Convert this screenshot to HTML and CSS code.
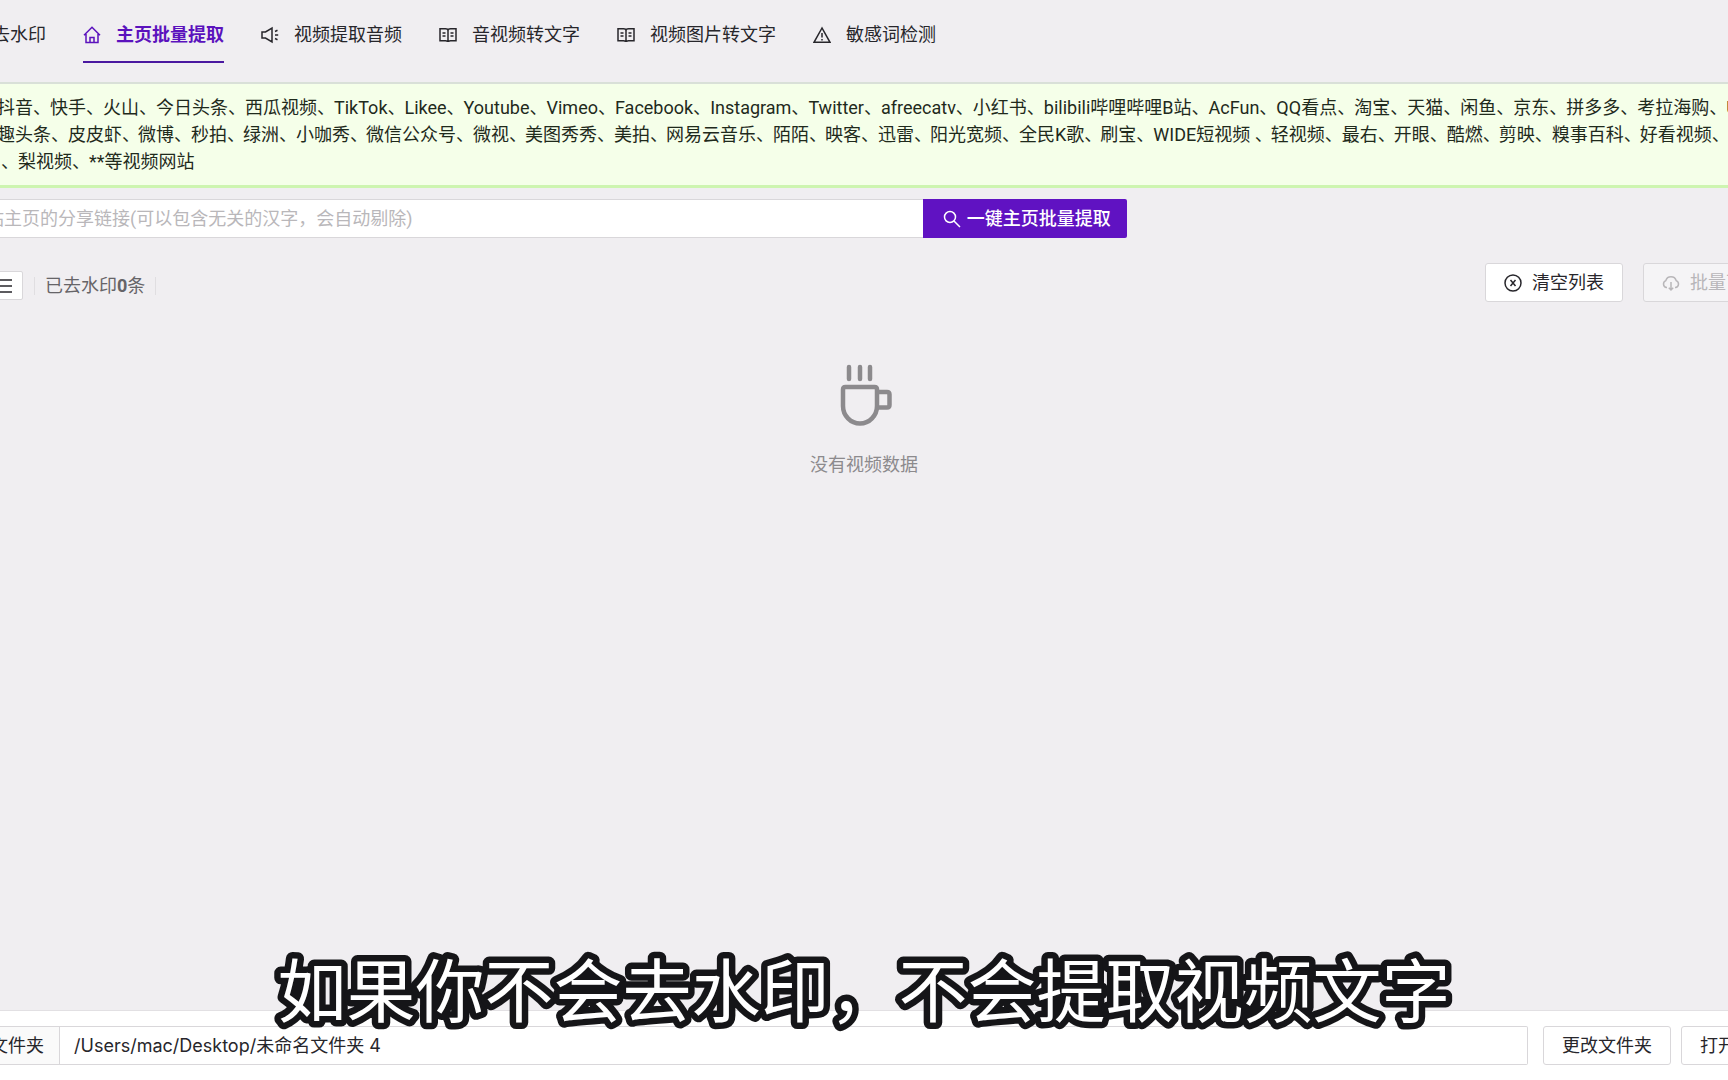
FILE: index.html
```html
<!DOCTYPE html>
<html lang="zh-CN">
<head>
<meta charset="utf-8">
<title>主页批量提取</title>
<link rel="stylesheet" href="styles.css">
</head>
<body>
<nav class="tabs">
  <a class="tab" href="#watermark">去水印</a>
  <a class="tab active" href="#home" aria-current="page">
    <svg class="icon" viewBox="0 0 18 18"><path d="M1 9.3 9 1.2l8 8.1M3 8v8.6h12V8M7 16.4v-5h4v5"/></svg>主页批量提取</a>
  <a class="tab" href="#audio">
    <svg class="icon" viewBox="0 0 18 18"><path d="M1 6v6h3.5l6.5 4V2L4.500 6zM14 5.500l2.500-1.200M14 9h3.200M14 12.500l2.500 1.200"/></svg>视频提取音频</a>
  <a class="tab" href="#speech">
    <svg class="icon" viewBox="0 0 18 18"><path d="M1 2.800h5.500Q9 2.800 9 4.500q0-1.700 2.500-1.700H17v12h-5.500Q9 14.800 9 16q0-1.200-2.500-1.200H1zM9 4.500V16M3.500 7h3M3.500 10h3M11.500 7h3M11.500 10h3"/></svg>音视频转文字</a>
  <a class="tab" href="#ocr">
    <svg class="icon" viewBox="0 0 18 18"><path d="M1 2.800h5.500Q9 2.800 9 4.500q0-1.700 2.500-1.700H17v12h-5.500Q9 14.800 9 16q0-1.200-2.500-1.200H1zM9 4.500V16M3.500 7h3M3.500 10h3M11.500 7h3M11.500 10h3"/></svg>视频图片转文字</a>
  <a class="tab" href="#words">
    <svg class="icon" viewBox="0 0 18 18"><path d="M9 2 1 16.300h16zM9 7v4.500M9 13v1.500"/></svg>敏感词检测</a>
</nav>

<section class="notice">
  <ul class="sites"><li>抖音、</li><li>快手、</li><li>火山、</li><li>今日头条、</li><li>西瓜视频、</li><li>TikTok、</li><li>Likee、</li><li>Youtube、</li><li>Vimeo、</li><li>Facebook、</li><li>Instagram、</li><li>Twitter、</li><li>afreecatv、</li><li>小红书、</li><li>bilibili哔哩哔哩B站、</li><li>AcFun、</li><li>QQ看点、</li><li>淘宝、</li><li>天猫、</li><li>闲鱼、</li><li>京东、</li><li>拼多多、</li><li>考拉海购、</li><li>U</li></ul>
  <ul class="sites dense"><li>趣头条、</li><li>皮皮虾、</li><li>微博、</li><li>秒拍、</li><li>绿洲、</li><li>小咖秀、</li><li>微信公众号、</li><li>微视、</li><li>美图秀秀、</li><li>美拍、</li><li>网易云音乐、</li><li>陌陌、</li><li>映客、</li><li>迅雷、</li><li>阳光宽频、</li><li>全民K歌、</li><li>刷宝、</li><li>WIDE短视频 、</li><li>轻视频、</li><li>最右、</li><li>开眼、</li><li>酷燃、</li><li>剪映、</li><li>糗事百科、</li><li>好看视频、</li></ul>
  <ul class="sites"><li>、</li><li>梨视频、</li><li>**等视频网站</li></ul>
</section>

<main class="main">
  <form class="search">
    <input class="search-input" type="text" aria-label="主页链接" placeholder="站主页的分享链接(可以包含无关的汉字，会自动剔除)">
    <button class="primary" type="button">
      <svg class="icon" viewBox="0 0 18 18"><circle cx="7" cy="7" r="5.500"/><path d="m11 11 6 6"/></svg>一键主页批量提取</button>
  </form>

  <div class="toolbar">
    <button class="list-button" type="button" aria-label="列表">
      <svg class="icon" viewBox="0 0 18 18"><path d="M2 3h15M2 9h15M2 15h15"/></svg>
    </button>
    <p class="count">已去水印<b>0</b>条</p>
    <div class="actions">
      <button class="button" type="button">
        <svg class="icon" viewBox="0 0 18 18"><circle cx="9" cy="9" r="8"/><path d="m6.500 6 5 6m0-6-5 6"/></svg>清空列表</button>
      <button class="button" type="button" disabled>
        <svg class="icon" viewBox="0 0 18 18"><path d="M5 13.500H4.500A3.600 3.600 0 0 1 3.800 6.600a5.400 5.400 0 0 1 10.400 0 3.600 3.600 0 0 1-.7 6.900H13M9 8v8M6.800 13.800 9 16l2.200-2.200"/></svg>批量下载</button>
    </div>
  </div>

  <div class="empty">
    <svg class="cup" viewBox="0 0 52 62"><path d="M9 3v12M20 3v12M30 3v12M3 25.500q0-2.500 2.500-2.500h29q2.500 0 2.500 2.500V42a17 17.500 0 0 1-34 0zM38 28h9q2.500 0 2.500 2.500v10.500q0 2.500-2.500 2.500h-9"/></svg>
    <p>没有视频数据</p>
  </div>
</main>

<footer class="footer">
  <div class="folder">
    <label class="folder-label" for="path">文件夹</label>
    <input class="folder-input" id="path" type="text" value="/Users/mac/Desktop/未命名文件夹 4">
  </div>
  <button class="button" type="button">更改文件夹</button>
  <button class="button" type="button">打开文件夹</button>
</footer>

<svg class="caption" role="img" aria-label="字幕"><text x="50%" y="77" text-anchor="middle">如果你不会去水印，不会提取视频文字</text></svg>
</body>
</html>
```
FILE: styles.css
```css
* { box-sizing: border-box; }

body {
  margin: 0;
  min-height: 100vh;
  display: flex;
  flex-direction: column;
  position: relative;
  overflow: hidden;
  background: #f0eef1;
  color: #27262b;
  font: 18px/27px Roboto, "Noto Sans CJK SC", sans-serif;
  white-space: nowrap;
}

p, ul { margin: 0; padding: 0; }
button, input { font: inherit; color: inherit; }

.icon {
  width: 18px;
  height: 18px;
  flex: none;
  fill: none;
  stroke: currentColor;
  stroke-width: 1.5;
}

.tabs {
  display: flex;
  gap: 37px;
  height: 82px;
  margin-left: -8px;
  align-items: flex-start;
}

.tab {
  display: flex;
  align-items: center;
  gap: 15px;
  height: 63px;
  padding: 8px 0 0;
  border-bottom: 2px solid transparent;
  color: inherit;
  text-decoration: none;
}

.tab.active {
  color: #5b12bd;
  font-weight: 700;
  border-color: #4a18a0;
}

.notice {
  padding: 10px 0;
  border-top: 2px solid #d9e0d8;
  border-bottom: 3px solid #cdf5b0;
  background: #f5ffe9;
  color: #1f2a1c;
}

.sites {
  display: flex;
  list-style: none;
  margin-left: -3px;
}

.sites:last-child { margin-left: 1px; }
.sites li { flex: none; margin-right: -1px; white-space: pre; }
.sites.dense li:nth-child(even) { margin-right: -2px; }

.main { flex: 1; }

.search { display: flex; margin-top: 11px; }

.search-input {
  width: calc(53.4vw + 14px);
  height: 39px;
  margin-left: -14px;
  padding: 0;
  border: solid #d9d7da;
  border-width: 1px 0;
  background: #fff;
}

.search-input::placeholder { color: #b9b7ba; opacity: 1; }

.primary {
  display: flex;
  align-items: center;
  gap: 6px;
  height: 39px;
  padding: 0 16px 0 20px;
  border: 0;
  border-radius: 0 2px 2px 0;
  background: #6012c2;
  color: #fff;
  font-weight: 500;
}

.toolbar {
  display: flex;
  align-items: center;
  height: 39px;
  margin-top: 25px;
}

.list-button {
  display: flex;
  align-items: center;
  width: 29px;
  height: 29px;
  margin-left: -6px;
  margin-top: 6px;
  padding: 0;
  border: 1px solid #d9d7da;
  border-radius: 2px;
  background: #fff;
}

.count {
  display: flex;
  align-items: center;
  height: 18px;
  margin: 6px 0 0 11px;
  padding: 0 10px;
  border: solid #e0dee1;
  border-width: 0 1px;
  color: #666468;
}

.actions {
  display: flex;
  gap: 20px;
  margin-left: auto;
  margin-right: -53px;
}

.button {
  display: flex;
  align-items: center;
  justify-content: center;
  gap: 10px;
  height: 39px;
  padding: 0 18px;
  border: 1px solid #d9d7da;
  border-radius: 3px;
  background: #fff;
}

.button:disabled { background: #f5f4f6; color: #b8b6b9; }

.empty {
  display: flex;
  flex-direction: column;
  align-items: center;
  gap: 25px;
  margin-top: 62px;
  color: #8c8a8d;
}

.cup {
  width: 52px;
  height: 62px;
  margin-left: 4px;
  fill: none;
  stroke: currentColor;
  stroke-width: 4.5;
  stroke-linecap: round;
}

.footer {
  display: flex;
  gap: 10px;
  margin-right: -81px;
  padding: 15px 0;
  border-top: 1px solid #e2e0e3;
  background: #fff;
}

.folder {
  display: flex;
  flex: 1;
  height: 39px;
  margin-right: 5px;
  border: 1px solid #d9d7da;
  border-left: 0;
  border-radius: 0 2px 2px 0;
}

.folder-label {
  display: flex;
  align-items: center;
  justify-content: flex-end;
  width: 60px;
  padding-right: 15px;
  overflow: hidden;
  border-right: 1px solid #d9d7da;
  background: #fafafa;
}

.folder-input {
  flex: 1;
  padding: 0 14px;
  border: 0;
  background: none;
  font-family: Inter, "Noto Sans CJK SC", sans-serif;
}

.caption {
  position: absolute;
  left: 0;
  bottom: 40px;
  width: 100%;
  height: 100px;
  fill: #fff;
  stroke: #151518;
  stroke-width: 13px;
  stroke-linejoin: round;
  paint-order: stroke;
  font-family: "Noto Sans CJK SC", sans-serif;
  font-size: 69px;
  pointer-events: none;
}
```
